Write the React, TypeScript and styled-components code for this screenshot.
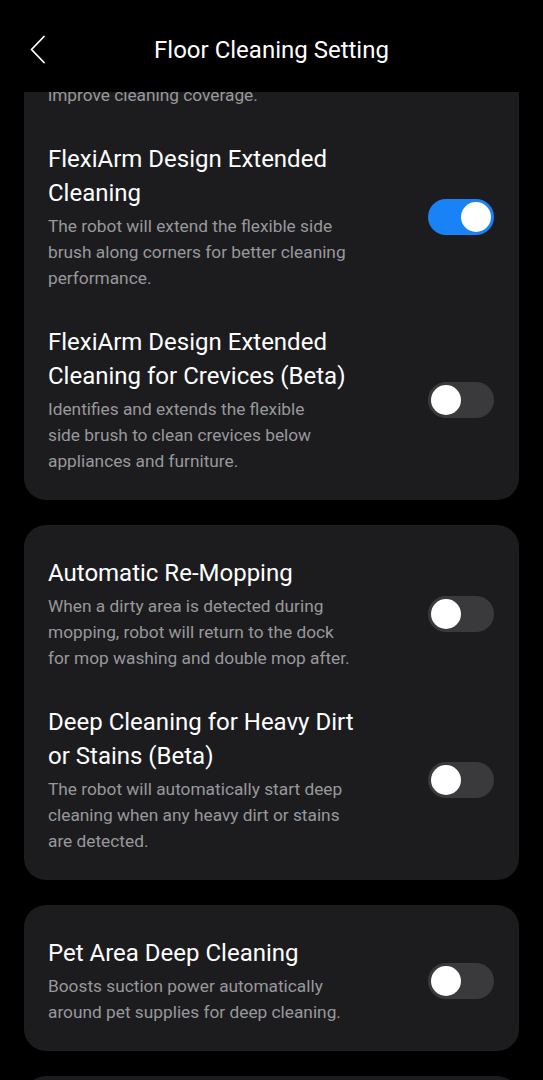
import { useLayoutEffect, useRef, useState, type FC } from "react";
import styled, { createGlobalStyle } from "styled-components";

type Setting = {
  id: string;
  title: string[];
  desc: string[];
  on: boolean;
};

const groups: Setting[][] = [
  [
    {
      id: "edge",
      title: ["Edge Deep Cleaning"],
      desc: ["The robot will clean closer to edges to", "improve cleaning coverage."],
      on: true,
    },
    {
      id: "flexi",
      title: ["FlexiArm Design Extended", "Cleaning"],
      desc: [
        "The robot will extend the flexible side",
        "brush along corners for better cleaning",
        "performance.",
      ],
      on: true,
    },
    {
      id: "crevices",
      title: ["FlexiArm Design Extended", "Cleaning for Crevices (Beta)"],
      desc: [
        "Identifies and extends the flexible",
        "side brush to clean crevices below",
        "appliances and furniture.",
      ],
      on: false,
    },
  ],
  [
    {
      id: "remop",
      title: ["Automatic Re-Mopping"],
      desc: [
        "When a dirty area is detected during",
        "mopping, robot will return to the dock",
        "for mop washing and double mop after.",
      ],
      on: false,
    },
    {
      id: "deep",
      title: ["Deep Cleaning for Heavy Dirt", "or Stains (Beta)"],
      desc: [
        "The robot will automatically start deep",
        "cleaning when any heavy dirt or stains",
        "are detected.",
      ],
      on: false,
    },
  ],
  [
    {
      id: "pet",
      title: ["Pet Area Deep Cleaning"],
      desc: [
        "Boosts suction power automatically",
        "around pet supplies for deep cleaning.",
      ],
      on: false,
    },
  ],
  [
    {
      id: "carpet",
      title: ["Carpet Boost"],
      desc: ["Increases suction power on carpets."],
      on: true,
    },
  ],
];

const App: FC = () => {
  const scrollerRef = useRef<HTMLDivElement>(null);
  const anchorRef = useRef<HTMLDivElement>(null);
  const [state, setState] = useState<Record<string, boolean>>(() =>
    Object.fromEntries(groups.flat().map((s) => [s.id, s.on]))
  );

  useLayoutEffect(() => {
    if (scrollerRef.current && anchorRef.current) {
      scrollerRef.current.scrollTop = anchorRef.current.offsetTop - 50;
    }
  }, []);

  return (
    <>
      <GlobalStyle />
      <Page>
        <Header>
          <BackButton aria-label="Back">
            <svg width="16" height="30" viewBox="0 0 16 30" fill="none">
              <path
                d="M14 1.5 L1.5 14.5 L14 27.5"
                stroke="#fff"
                strokeWidth="1.8"
                strokeLinecap="round"
                strokeLinejoin="round"
              />
            </svg>
          </BackButton>
          <Title>Floor Cleaning Setting</Title>
        </Header>

        <Scroller ref={scrollerRef}>
          {groups.map((group, gi) => (
            <Card key={gi}>
              {group.map((s) => (
                <Row key={s.id} ref={s.id === "flexi" ? anchorRef : undefined}>
                  <TextCol>
                    <ItemTitle>
                      {s.title.map((l, i) => (
                        <Line key={i}>{l}</Line>
                      ))}
                    </ItemTitle>
                    <ItemDesc>
                      {s.desc.map((l, i) => (
                        <Line key={i}>{l}</Line>
                      ))}
                    </ItemDesc>
                  </TextCol>
                  <Toggle
                    $on={state[s.id]}
                    onClick={() => setState((p) => ({ ...p, [s.id]: !p[s.id] }))}
                  >
                    <Knob />
                  </Toggle>
                </Row>
              ))}
            </Card>
          ))}
        </Scroller>
      </Page>
    </>
  );
};

export default App;

const GlobalStyle = createGlobalStyle`
  * { box-sizing: border-box; }
  html, body {
    margin: 0;
    padding: 0;
    background: #000;
    font-family: Roboto, "Noto Sans", sans-serif;
    overflow: hidden;
  }
`;

const Page = styled.div`
  display: flex;
  flex-direction: column;
  width: 543px;
  height: 1080px;
  background: #000;
`;

const Header = styled.div`
  display: flex;
  align-items: center;
  justify-content: center;
  height: 92px;
  flex-shrink: 0;
  position: relative;
`;

const BackButton = styled.button`
  position: absolute;
  left: 30px;
  top: 35px;
  padding: 0;
  border: none;
  background: none;
  display: flex;
  cursor: pointer;
`;

const Title = styled.h1`
  margin: 0;
  margin-top: 8px;
  font-size: 24px;
  font-weight: 400;
  color: #fff;
`;

const Scroller = styled.div`
  position: relative;
  flex: 1;
  overflow-y: auto;
  scrollbar-width: none;
  display: flex;
  flex-direction: column;
  gap: 25px;
  padding: 0 24px 24px;

  &::-webkit-scrollbar {
    display: none;
  }
`;

const Card = styled.div`
  display: flex;
  flex-direction: column;
  gap: 34px;
  flex-shrink: 0;
  background: #1c1c1e;
  border-radius: 22px;
  padding: 31px 25px 26px 24px;
`;

const Row = styled.div`
  display: flex;
  align-items: center;
  justify-content: space-between;
`;

const TextCol = styled.div`
  display: flex;
  flex-direction: column;
`;

const ItemTitle = styled.div`
  font-size: 24px;
  line-height: 34px;
  color: #fff;
  margin-bottom: 3px;
`;

const ItemDesc = styled.div`
  font-size: 17.3px;
  line-height: 26px;
  color: #98989b;
`;

const Line = styled.div`
  white-space: nowrap;
`;

const Toggle = styled.button<{ $on: boolean }>`
  display: flex;
  align-items: center;
  justify-content: ${(p) => (p.$on ? "flex-end" : "flex-start")};
  width: 66px;
  height: 36px;
  padding: 3px;
  border: none;
  border-radius: 18px;
  background: ${(p) => (p.$on ? "#1a82f7" : "#3a3a3d")};
  flex-shrink: 0;
  cursor: pointer;
`;

const Knob = styled.span`
  width: 30px;
  height: 30px;
  border-radius: 50%;
  background: #fff;
`;
